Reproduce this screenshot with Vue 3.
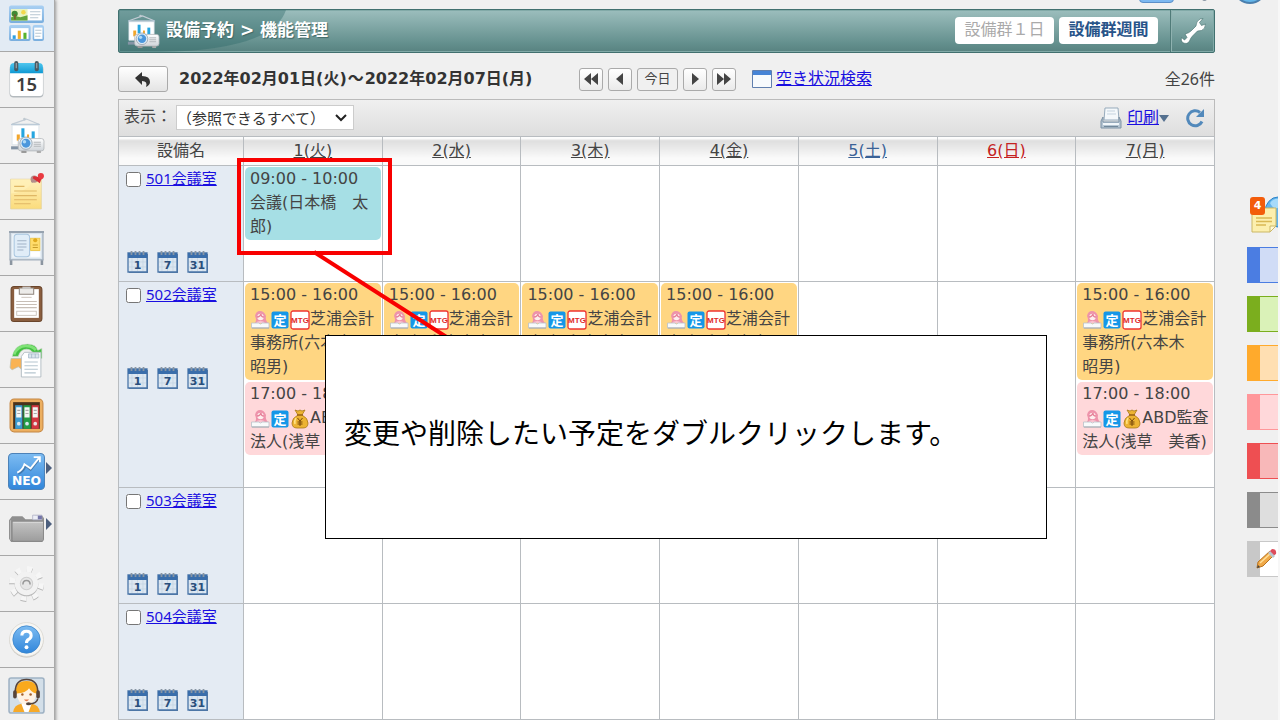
<script setup>
const week = [
  { label: '1(火)' },
  { label: '2(水)' },
  { label: '3(木)' },
  { label: '4(金)' },
  { label: '5(土)', tone: 'sat' },
  { label: '6(日)', tone: 'sun' },
  { label: '7(月)' }
]

const shibaura = { time: '15:00 - 16:00', icons: ['person', 'fixed', 'mtg'], text: '芝浦会計事務所(六本木　昭男)', tone: 'orange' }
const audit = { time: '17:00 - 18:00', icons: ['person', 'fixed', 'money'], text: 'ABD監査法人(浅草　美香)', tone: 'pink' }
const meeting = { time: '09:00 - 10:00', icons: [], text: '会議(日本橋　太郎)', tone: 'teal' }

const rooms = [
  { id: 501, days: [[meeting], [], [], [], [], [], []] },
  { id: 502, tall: true, days: [[shibaura, audit], [shibaura], [shibaura], [shibaura], [], [], [shibaura, audit]] },
  { id: 503, days: [[], [], [], [], [], [], []] },
  { id: 504, days: [[], [], [], [], [], [], []] }
]

const menu = [
  { icon: 'portal', label: 'ポータル', active: true },
  { icon: 'calendar', label: 'スケジュール' },
  { icon: 'projector', label: '設備予約' },
  { icon: 'note', label: 'メモ' },
  { icon: 'board', label: '掲示板' },
  { icon: 'clipboard', label: 'レポート' },
  { icon: 'flow', label: '回覧' },
  { icon: 'binders', label: '文書管理' },
  { icon: 'neo', label: 'NEO', more: true },
  { icon: 'folder', label: 'フォルダ', more: true },
  { icon: 'gear', label: '設定' },
  { icon: 'help', label: 'ヘルプ' },
  { icon: 'support', label: 'サポート' }
]

const tabs = ['blue', 'green', 'amber', 'rose', 'red', 'gray']
</script>

<template>
  <div class="app">
    <svg class="defs" aria-hidden="true">
      <defs>
        <linearGradient id="gBlue" x1="0" y1="0" x2="0" y2="1"><stop offset="0" stop-color="#7dbcf2" /><stop offset="1" stop-color="#3186da" /></linearGradient>
        <linearGradient id="gPanel" x1="0" y1="0" x2="0" y2="1"><stop offset="0" stop-color="#a9d0f3" /><stop offset="1" stop-color="#79aede" /></linearGradient>
        <linearGradient id="gCyan" x1="0" y1="0" x2="0" y2="1"><stop offset="0" stop-color="#4fc6ee" /><stop offset="1" stop-color="#0e98d2" /></linearGradient>
        <linearGradient id="gNote" x1="0" y1="0" x2="0" y2="1"><stop offset="0" stop-color="#fff0bd" /><stop offset="1" stop-color="#fbdc7c" /></linearGradient>
        <linearGradient id="gGray" x1="0" y1="0" x2="0" y2="1"><stop offset="0" stop-color="#c4c4c4" /><stop offset="1" stop-color="#9c9c9c" /></linearGradient>
        <linearGradient id="gWhite" x1="0" y1="0" x2="0" y2="1"><stop offset="0" stop-color="#fff" /><stop offset="1" stop-color="#cfd4d9" /></linearGradient>
        <symbol id="portal" viewBox="0 0 36 36">
          <rect x="1" y="0.500" width="34" height="17" rx="2" fill="url(#gPanel)" /><rect x="3" y="4" width="30" height="11" fill="#fff" />
          <rect x="3" y="4" width="16" height="11" fill="#e6f3c0" /><circle cx="15" cy="7" r="2.200" fill="#f3d94c" /><path d="M3 15v-3l5-1 4 1 7-2v5z" fill="#62a53c" /><circle cx="6.500" cy="8.500" r="3" fill="#3e8a35" /><path d="M6 9h1.500v5H6z" fill="#7b5a2c" />
          <path d="M21.500 6.500h10M21.500 9.500h10M21.500 12.500h8" stroke="#b6c6d2" />
          <rect x="1" y="19.500" width="21" height="15.500" rx="2" fill="url(#gPanel)" /><rect x="3" y="22.500" width="17" height="10.500" fill="#fff" />
          <path d="M6 33v-3.500" stroke="#2f9fe0" stroke-width="3" /><path d="M11 33v-8" stroke="#f0ae26" stroke-width="3" /><path d="M16.500 33v-6" stroke="#58b32f" stroke-width="3" />
          <rect x="24" y="19.500" width="11" height="15.500" rx="2" fill="url(#gPanel)" /><rect x="25.500" y="22" width="8" height="11" fill="#fff" /><path d="M26.500 24.500h6M26.500 27.500h6M26.500 30.500h5" stroke="#b6c6d2" />
        </symbol>
        <symbol id="calendar" viewBox="0 0 36 36">
          <rect x="1.500" y="4" width="33" height="31.500" rx="4" fill="#b4babe" /><rect x="2" y="3" width="32" height="31" rx="3" fill="#fff" /><path d="M2 12V6q0-4 4-4h24q4 0 4 4v6z" fill="url(#gCyan)" />
          <rect x="6" y="0" width="4" height="10" rx="2" fill="#4b5961" /><rect x="26" y="0" width="4" height="10" rx="2" fill="#4b5961" /><path d="M8 2v5M28 2v5" stroke="#a6b1b7" />
          <text x="18" y="29" text-anchor="middle" font-family="Noto Sans" font-size="18" font-weight="600" fill="#3d3d3d">15</text>
        </symbol>
        <symbol id="projector" viewBox="0 0 36 36">
          <path d="M4 7l14-5 12 5" fill="none" stroke="#c3ccd5" stroke-width="1.200" /><circle cx="16" cy="2" r="1.300" fill="#bfc9d0" /><rect x="3" y="6.500" width="28" height="1.500" rx=".7" fill="#b4c5d4" /><path d="M4 8h26v19H4z" fill="#fff" stroke="#d5dfe7" stroke-width=".7" />
          <path d="M10 23v-6" stroke="#f2a62c" stroke-width="3" /><path d="M14.500 20v-9" stroke="#25a5df" stroke-width="3" /><path d="M24.500 21v-7" stroke="#25a5df" stroke-width="3" /><path d="M19.500 21v-4" stroke="#f2a62c" stroke-width="2" />
          <path d="M3 30h8" stroke="#8494a5" stroke-width="3" /><rect x="10" y="21" width="25" height="12" rx="2.500" fill="url(#gWhite)" stroke="#b2b6ba" stroke-width=".8" /><rect x="13" y="33" width="5" height="2" fill="#999" /><rect x="28" y="33" width="4" height="2" fill="#aaa" />
          <path d="M25 24.500h7M25 26.500h7M25 28.500h7" stroke="#b4b8bb" /><circle cx="17.500" cy="25.500" r="6" fill="#dbeaf5" stroke="#95a1ac" stroke-width=".8" /><circle cx="17.500" cy="25.500" r="4.300" fill="#4b97dc" /><circle cx="16" cy="24" r="1.700" fill="#afd9f6" />
        </symbol>
        <symbol id="note" viewBox="0 0 36 36">
          <path d="M2.500 6h30v29h-30z" fill="url(#gNote)" stroke="#e3d3a0" stroke-width=".7" /><path d="M3 20q17-2 22-14H3z" fill="#fff1b7" opacity=".7" /><path d="M6 13h10M6 17.500h22M6 22h22M6 26h22M6 30h16" stroke="#dfb765" />
          <path d="M23 9l4-4" stroke="#747474" stroke-width="1.500" /><circle cx="25.500" cy="6" r="3.500" fill="#b58e8b" /><path d="M25 3l4 1 2-3 3 3-2 3-1 3-7-5z" fill="#d92e35" /><circle cx="32" cy="3" r="3" fill="#e93b42" />
        </symbol>
        <symbol id="board" viewBox="0 0 36 36">
          <path d="M3 29v6M33 29v6" stroke="#8b95a0" stroke-width="2.500" /><rect x="2" y="3" width="32" height="27" fill="#d9e3ec" stroke="#a3b0bd" stroke-width="1.300" /><path d="M1 3h34" stroke="#97a3b0" stroke-width="2" /><rect x="4" y="5" width="28" height="23" fill="#eef4f9" />
          <rect x="6" y="5" width="15" height="22" rx="3" fill="#e0edf8" stroke="#a9c6df" /><path d="M9 11.500h9M9 14.500h9M9 17.500h9M9 20.500h6" stroke="#a0b2c5" />
          <rect x="22" y="9" width="9" height="12" fill="#ffdc6b" stroke="#ecc445" stroke-width=".8" /><circle cx="26.500" cy="11" r="2" fill="#e0a91d" /><path d="M24 15.500h5M24 18h5" stroke="#c79b2a" /><path d="M22 22h9v5h-9z" fill="#fff" />
        </symbol>
        <symbol id="clipboard" viewBox="0 0 36 36">
          <rect x="3" y="1.500" width="30" height="34" rx="3" fill="#8a5e3f" stroke="#6a452b" /><path d="M6 4h24v28H6z" fill="#fff" /><path d="M11 3h14v6H11z" fill="#ecebe9" stroke="#8e857d" /><path d="M14 1.500h8V4h-8z" fill="#c8c5c2" />
          <path d="M13 12h10" stroke="#cfc7c0" /><path d="M8 16h20M8 19h20M8 22h20" stroke="#c7beb6" /><rect x="8.500" y="25.500" width="19" height="4" fill="none" stroke="#c3bbb3" stroke-width=".8" />
        </symbol>
        <symbol id="flow" viewBox="0 0 36 36">
          <path d="M4 15Q7 3 19 3q8 0 10 6l4-2v10H21l4-4q-2-5-7-5-6 0-8 7z" fill="#44bf42" stroke="#d2dbd0" stroke-width=".7" /><path d="M6 13Q10 4 19 5q5 0 8 4" fill="none" stroke="#7fe376" stroke-width="2.500" />
          <path d="M3 17h11v11l-4-3-6 3-2-2z" fill="#f9b354" stroke="#bfbfae" stroke-width=".8" /><path d="M13 15l3-4h16v24H13z" fill="#fff" stroke="#aab4bc" stroke-width=".8" /><path d="M20 12.500h10v4H20z" fill="#dce6ee" stroke="#9fb3c4" stroke-width=".7" /><path d="M23 12.500v4M26.500 12.500v4" stroke="#9fb3c4" stroke-width=".7" /><path d="M16 20.500h13M16 24h13M16 27.500h13M16 31h11" stroke="#b6c6d0" />
        </symbol>
        <symbol id="binders" viewBox="0 0 36 36">
          <rect x="2" y="2" width="32" height="32" rx="4" fill="#ecaf60" stroke="#c48643" /><rect x="5" y="5" width="26" height="26" fill="#49331d" />
          <path d="M7 8h7v23H7z" fill="#3d9cd2" /><path d="M15 8h7v23h-7z" fill="#229c45" /><path d="M23 8h7v23h-7z" fill="#d33741" /><path d="M8 10h5v10H8zM16 10h5v10h-5zM24 10h5v10h-5z" fill="#f4f6f4" /><path d="M9 13h3M9 16h3M17 13h3M17 16h3M25 13h3M25 16h3" stroke="#aaa" />
          <circle cx="10.500" cy="26" r="1.800" fill="#d7e7ee" /><circle cx="18.500" cy="26" r="1.800" fill="#d7e7ee" /><circle cx="26.500" cy="26" r="1.800" fill="#eee2e2" />
        </symbol>
        <symbol id="neo" viewBox="0 0 36 36">
          <rect x=".5" y=".5" width="35" height="35" rx="4" fill="url(#gBlue)" stroke="#4d82b8" /><path d="M10 20q5-2 7-8l5 4 8-10" fill="none" stroke="#315a83" stroke-width="2.500" opacity=".55" /><path d="M9 19q5-2 7-8l6 4L30 5M25 4h6v5" fill="none" stroke="#fff" stroke-width="1.800" />
          <text x="18" y="31" text-anchor="middle" font-family="DejaVu Sans" font-size="12" font-weight="bold" fill="#fff">NEO</text>
        </symbol>
        <symbol id="folder" viewBox="0 0 36 36">
          <path d="M1 11l3-4h10l3 3h9V6h7l2 3v20l-2 3H3l-2-3z" fill="#8f8f8f" /><path d="M4 12h30.500v18l-1 1.500H5L4 30z" fill="url(#gGray)" stroke="#858585" stroke-width=".8" /><path d="M5 13h29" stroke="#d8d8d8" /><path d="M24 6h9v4.500h-9z" fill="#eceef6" stroke="#a9aac0" stroke-width=".7" /><path d="M29 6.500h4v3.500h-4z" fill="#7475a8" /><path d="M2.500 11v19" fill="none" stroke="#b8b8b8" />
        </symbol>
        <symbol id="gear" viewBox="0 0 36 36">
          <circle cx="18" cy="19" r="14" fill="none" stroke="#b5b5b5" stroke-width="6" stroke-dasharray="5 6" /><circle cx="18" cy="18" r="14" fill="none" stroke="#f6f6f6" stroke-width="6" stroke-dasharray="5 6" />
          <circle cx="18" cy="19" r="11.500" fill="#b9b9b9" /><circle cx="18" cy="18" r="11.500" fill="#f2f2f2" /><circle cx="18" cy="18" r="6" fill="#e6e6e6" stroke="#cfcfcf" /><path d="M14.500 19q0-4 3.500-4t3.500 4" fill="none" stroke="#999" stroke-width="1.500" />
        </symbol>
        <symbol id="help" viewBox="0 0 36 36">
          <circle cx="18" cy="19" r="16.500" fill="#c4c1bb" /><circle cx="18" cy="18" r="16.500" fill="#f7f6f3" stroke="#dbd8d2" stroke-width=".8" /><circle cx="18" cy="18" r="13.300" fill="url(#gBlue)" stroke="#3c86cc" stroke-width=".8" /><path d="M13.500 14q0-4 4.500-4t4.500 4q0 2.500-2.500 4-2 1-2 3.500" fill="none" stroke="#fff" stroke-width="3" /><circle cx="18" cy="25.500" r="1.900" fill="#fff" />
        </symbol>
        <symbol id="support" viewBox="0 0 36 36">
          <rect x="1" y="1" width="34" height="34" rx="2" fill="#d3dfe9" stroke="#9fb2c4" stroke-width="1.500" /><path d="M5 34q1-7 8-8h10q7 1 8 8z" fill="#f7a927" /><path d="M13 26h10l-3 8h-4z" fill="#fff" /><path d="M8 17Q6 4 18 4t10 13z" fill="#f9a91d" /><path d="M8.500 16q9 0 12-5 2 4 7 5-1 11-9.500 11T8.500 16z" fill="#fff3e4" />
          <path d="M7 15Q7 2.500 18 2.500T29 15" fill="none" stroke="#57443a" stroke-width="1.500" /><rect x="5" y="13" width="3.500" height="8" rx="1.700" fill="#57443a" /><rect x="27.500" y="13" width="3.500" height="8" rx="1.700" fill="#57443a" /><path d="M29 21q-1 5-8 5" fill="none" stroke="#57443a" stroke-width="1.500" /><ellipse cx="20" cy="26" rx="2.500" ry="1.500" fill="#57443a" /><circle cx="14" cy="17" r="1.200" fill="#a5602a" /><circle cx="22" cy="17" r="1.200" fill="#a5602a" /><path d="M15.500 22h5q-2.500 3-5 0z" fill="#e87f50" />
        </symbol>
        <symbol id="person" viewBox="0 0 20 20">
          <path d="M5 13q2-3 0-7 1-5 5-5t6 5q-1 4 2 7z" fill="#ee93ab" /><circle cx="10.500" cy="7" r="3.200" fill="#fdeeee" /><path d="M7 7q3 0 4-3 0 3 3 3" fill="none" stroke="#e68198" stroke-width="1.300" /><path d="M6 13q1-2 4.500-2t4.500 2z" fill="#f9c3d0" /><path d="M1.500 13h7l2 1 2-1h6.500v5h-17.500z" fill="#f8fafb" stroke="#b8c0c9" stroke-width=".8" /><path d="M2 18h17" stroke="#a2a9b0" />
        </symbol>
        <symbol id="fixed" viewBox="0 0 20 20"><rect x="1.500" y="1.500" width="17" height="17" rx="2" fill="#1597e8" /><text x="10" y="15" text-anchor="middle" font-family="Noto Sans CJK JP" font-size="13" font-weight="bold" fill="#fff">定</text></symbol>
        <symbol id="mtg" viewBox="0 0 20 20"><rect x="1" y="1" width="18" height="18" rx="2" fill="#fff" stroke="#ee3430" stroke-width="1.300" /><text x="10" y="13" text-anchor="middle" font-family="Liberation Sans" font-size="8" font-weight="bold" fill="#e02828">MTG</text></symbol>
        <symbol id="money" viewBox="0 0 20 20"><path d="M5 1l3 1 2-1 2 1 3-1-3 5q6 3 6 8 0 5-5 5H7q-5 0-5-5 0-5 6-8z" fill="#edb333" stroke="#a87919" stroke-width=".8" /><path d="M7 6h6" stroke="#986215" stroke-width="1.500" /><path d="M6 9q-2 3-1 6" fill="none" stroke="#ffe486" stroke-width="1.500" /><path d="M7.500 9l2.500 3 2.500-3M10 12v5M7.500 13h5M7.500 15h5" fill="none" stroke="#79490b" /></symbol>
        <symbol id="minical" viewBox="0 0 22 24"><path d="M2 4h19v19H2z" fill="#5678a0" /><path d="M1 3h19v19H1z" fill="#dce7f1" stroke="#4a76a8" stroke-width="1.300" /><path d="M1 3h19v5H1z" fill="#3a6eab" /><path d="M4.500 1v4M8.500 1v4M12.500 1v4M16.500 1v4" stroke="#8896a4" stroke-width="1.800" /><path d="M5 8v13M10.500 8v13M16 8v13M2 12h17M2 17h17" stroke="#c2d2e1" stroke-width=".7" /></symbol>
      </defs>
    </svg>

    <nav class="side">
      <a v-for="m in menu" :key="m.icon" href="#" class="side-item" :class="{ active: m.active }" :aria-label="m.label">
        <svg class="side-icon"><use :href="'#' + m.icon" /></svg>
        <span v-if="m.more" class="more"></span>
      </a>
    </nav>

    <main class="main">
      <header class="title-bar">
        <svg class="swoosh" viewBox="0 0 168 42" preserveAspectRatio="none" aria-hidden="true"><path d="M0 0h167Q154 40 40 42H0z" fill="#2b6767" opacity=".38" /></svg>
        <svg class="title-icon"><use href="#projector" /></svg>
        <h1>設備予約 &gt; 機能管理</h1>
        <button class="view off">設備群１日</button>
        <button class="view">設備群週間</button>
        <button class="tool" aria-label="設定">
          <svg viewBox="0 0 28 28" width="28" height="28"><path d="M3.500 25.500q-2-2-1-5l3 2.500 2.500-2.500-2-3.500q4-1 6-3l5-5q0-5 4-7l3-.5-3.500 4 2 3 4-1.500q0 5-4 6.500l-4 .5-5 5q-2 2-3 5-2 4-7 1.500z" fill="#fff" stroke="#3f6d6b" stroke-width=".6" /></svg>
        </button>
      </header>

      <div class="nav-row">
        <button class="back" aria-label="戻る"><svg viewBox="0 0 18 18" width="18" height="18"><path d="M1 8l7-6v4q8 0 8 6 0 3-4 5 2-6-4-6v4z" fill="#333" /></svg></button>
        <h2><span>2022年02月01日(火)</span><span>～</span><span>2022年02月07日(月)</span></h2>
        <div class="pager">
          <button class="step" aria-label="前週"><svg viewBox="0 0 16 12" width="16" height="12"><path d="M8 0v12L1 6zM15 0v12L8 6z" /></svg></button>
          <button class="step" aria-label="前日"><svg viewBox="0 0 16 12" width="16" height="12"><path d="M11 0v12L4 6z" /></svg></button>
          <button class="today">今日</button>
          <button class="step" aria-label="翌日"><svg viewBox="0 0 16 12" width="16" height="12"><path d="M5 0v12l7-6z" /></svg></button>
          <button class="step" aria-label="翌週"><svg viewBox="0 0 16 12" width="16" height="12"><path d="M1 0v12l7-6zM8 0v12l7-6z" /></svg></button>
        </div>
        <a class="search" href="#"><svg viewBox="0 0 20 18" width="20" height="18"><path d="M.5.500h19v17H.500z" fill="#f7fafd" stroke="#607fae" /><path d="M1 1h18v4H1z" fill="#4684d6" /></svg><span>空き状況検索</span></a>
        <span class="total">全26件</span>
      </div>

      <div class="filter">
        <label for="scope">表示：</label>
        <div class="select-wrap">
          <select id="scope"><option>（参照できるすべて）</option></select>
          <svg viewBox="0 0 12 8" width="12" height="8"><path d="M1 1l5 5 5-5" fill="none" stroke="#222" stroke-width="2" /></svg>
        </div>
        <a class="print" href="#">
          <svg viewBox="0 0 22 22" width="22" height="22"><path d="M5 1h13l1 12H4z" fill="#f4f8fb" stroke="#97abbc" /><path d="M7 4h8M7 7h9" stroke="#c5d3df" /><path d="M3 10l-2 4v7h20v-7l-2-4v5H3z" fill="#b5c5d2" stroke="#7d92a5" /><path d="M3 17h16" stroke="#f2f7fa" stroke-width="2" /><path d="M4 19.500h14" stroke="#71889b" /></svg>
          <span>印刷</span><i class="caret"></i>
        </a>
        <button class="reload" aria-label="更新"><svg viewBox="0 0 20 20" width="20" height="20"><path d="M17 13.500A7.500 7.500 0 1 1 15 4.500" fill="none" stroke="#5289bb" stroke-width="3" /><path d="M19 1v8h-8z" fill="#5289bb" /></svg></button>
      </div>

      <table class="grid">
        <thead>
          <tr><th class="name-col">設備名</th><th v-for="d in week" :key="d.label"><a href="#" :class="d.tone">{{ d.label }}</a></th></tr>
        </thead>
        <tbody>
          <tr v-for="r in rooms" :key="r.id" :class="{ tall: r.tall }">
            <td class="name">
              <div class="room"><input :id="'room' + r.id" type="checkbox" :aria-label="r.id + '会議室'" /><a href="#">{{ r.id }}会議室</a></div>
              <div class="ranges">
                <a v-for="n in [1, 7, 31]" :key="n" href="#" :aria-label="n + '日表示'">
                  <svg viewBox="0 0 22 24" width="22" height="24"><use href="#minical" /><text x="10.500" y="19" text-anchor="middle" font-family="DejaVu Sans" font-size="11" font-weight="bold" fill="#294f7c">{{ n }}</text></svg>
                </a>
              </div>
            </td>
            <td v-for="(events, i) in r.days" :key="i" class="day">
              <div v-for="e in events" :key="e.time" class="event" :class="e.tone">
                <div>{{ e.time }}</div>
                <div><svg v-for="ic in e.icons" :key="ic" class="tag"><use :href="'#' + ic" /></svg>{{ e.text }}</div>
              </div>
            </td>
          </tr>
        </tbody>
      </table>
    </main>

    <aside class="memo">
      <div class="memo-head">
        <svg viewBox="0 0 29 38" width="29" height="38"><ellipse cx="28" cy="16" rx="13" ry="15" fill="#62b4ec" stroke="#2c83c7" /><path d="M20 7q4-5 9-4v8q-5 4-9-4z" fill="#a6dafa" /><path d="M2 12h24v18l-6 6H2z" fill="#fcefae" stroke="#cbb765" /><path d="M20 36v-6h6z" fill="#fff9d8" stroke="#cbb765" /><path d="M6 22h16M6 25.500h16M6 29h10" stroke="#d9b954" stroke-width="1.300" /></svg>
        <span class="count">4</span>
      </div>
      <button v-for="t in tabs" :key="t" class="tab" :class="t" :aria-label="t"></button>
      <button class="tab edit" aria-label="編集"><svg viewBox="0 0 22 22" width="22" height="22"><path d="M2 20l1-6L15 3l4 4L8 18z" fill="#f0a948" stroke="#b87320" /><path d="M5 15L16 5" stroke="#ffe09a" stroke-width="1.500" /><path d="M14 4l3-3q5 0 4 5l-3 2z" fill="#dd4b5b" /><path d="M13 5l2-2 5 5-2 2z" fill="#b8c4cd" /><path d="M2 20l1-3 2 2z" fill="#444" /></svg></button>
    </aside>

    <div class="edge" aria-hidden="true"><span class="edge-box"></span><span class="edge-dot"></span><span class="edge-round"></span></div>

    <div class="guide">
      <div class="frame"></div>
      <svg class="leader" viewBox="0 0 140 90"><path d="M6 4l134 86" stroke="#f80000" stroke-width="4" /></svg>
      <p class="callout">変更や削除したい予定をダブルクリックします。</p>
    </div>
  </div>
</template>

<style>
html, body { margin: 0; background: #f0f0f0; overflow: hidden; }
</style>

<style scoped>
.app { position: relative; display: flex; height: 100vh; overflow: hidden; background: #f0f0f0; color: #444; font: 16px/24px "DejaVu Sans", "Noto Sans CJK JP", sans-serif; }
.app * { box-sizing: border-box; }
.defs { position: absolute; width: 0; height: 0; }
button { font: inherit; padding: 0; margin: 0; }
svg { display: block; flex: none; }
a { color: #1a0fe0; }

.side { flex: none; width: 55px; height: max-content; border-right: 1px solid #aaa; box-shadow: 1px 0 3px #999; background: #f0f0f0; }
.side-item { position: relative; display: flex; align-items: center; height: 56px; padding-left: 8px; border-bottom: 1px solid #a8a8a8; }
.side-item.active { height: 52px; padding-bottom: 4px; background: #e2ebf4; }
.side-icon { width: 37px; height: 37px; }
.more { position: absolute; left: 46px; top: 18px; border: 6px solid transparent; border-left-color: #4c5f7e; border-right-width: 0; }

.main { flex: 1; min-width: 0; margin: 9px 32px 0 63px; }
.title-bar { position: relative; display: flex; align-items: center; height: 44px; border: 1px solid #41706f; background: linear-gradient(#9cbebd, #638f8d 80%, #588280); box-shadow: inset 0 0 0 1px #82aaa8; border-radius: 2px; }
.swoosh { position: absolute; left: 0; top: 0; width: 168px; height: 42px; }
.title-icon { position: relative; width: 35px; height: 35px; margin-left: 6px; }
h1 { position: relative; flex: 1; margin: 0 0 2px 6px; font-size: 17px; color: #fff; text-shadow: 1px 1px 1px #416867; }
.view { width: 99px; height: 27px; margin: 0 5px 2px 0; border: 0; border-radius: 4px; background: #fff; color: #285489; font-family: "Noto Sans CJK JP", sans-serif; font-weight: 700; line-height: 20px; padding-bottom: 4px; }
.view.off { color: #aaa; font-weight: 400; }
.tool { display: flex; align-items: center; justify-content: center; align-self: stretch; width: 44px; margin-left: 7px; border: 0; border-left: 1px solid #507b79; box-shadow: inset 1px 0 #8fb2b0; background: none; }

.nav-row { display: flex; align-items: center; height: 46px; padding-top: 6px; }
.back { display: flex; align-items: center; justify-content: center; width: 50px; height: 26px; border: 1px solid #aaa; border-radius: 3px; background: linear-gradient(#fff, #e4e4e4); }
h2 { display: flex; gap: 1px; width: 400px; margin: 0 0 0 11px; font-size: 16px; color: #333; white-space: nowrap; }
.pager { display: flex; gap: 5px; margin-right: 17px; }
.step, .today { display: flex; align-items: center; justify-content: center; width: 24px; height: 23px; border: 1px solid #aaa; border-radius: 3px; background: linear-gradient(#fff, #eaeaea); fill: #444; }
.today { width: 41px; padding-bottom: 2px; font-size: 13px; font-family: "Noto Sans CJK JP", sans-serif; color: #444; background: #f0f0f0; }
.search { display: flex; align-items: center; gap: 4px; margin-left: -1px; }
.total { margin-left: auto; font-family: "Noto Sans", "Noto Sans CJK JP", sans-serif; }

.filter { display: flex; align-items: center; height: 37px; padding: 0 9px 0 5px; border: 1px solid #bbb; border-bottom: 0; background: linear-gradient(#f0f0f0, #dedede); }
.filter label { padding-bottom: 2px; }
.select-wrap { position: relative; margin-left: 4px; }
.select-wrap svg { position: absolute; right: 7px; top: 9px; pointer-events: none; }
select { appearance: none; width: 178px; height: 25px; padding: 0; border: 1px solid #ccc; background: #fff; color: #333; font: 15px/23px "Noto Sans CJK JP", sans-serif; }
.print { display: flex; align-items: center; gap: 5px; margin-left: auto; }
.caret { margin-left: -5px; border: 5px solid transparent; border-top: 7px solid #54708f; border-bottom: 0; }
.reload { margin-left: 16px; border: 0; background: none; }

.grid { width: 100%; table-layout: fixed; border-collapse: collapse; background: #fff; }
th, td { padding: 0; border: 1px solid #b8bcc0; }
th { height: 29px; background: linear-gradient(#fff 1px, #dedede 3px, #fafafa 75%); font-weight: 400; line-height: 26px; }
th a { color: #444; }
th a.sat { color: #3a6297; }
th a.sun { color: #c42222; }
.name-col { width: 125px; }
td { height: 116px; vertical-align: top; }
.tall td { height: 206px; }
.name { background: #e4ebf3; }
.room { display: flex; align-items: flex-start; height: 26px; padding-left: 7px; gap: 5px; font: 15px/24px "Noto Sans", "Noto Sans CJK JP", sans-serif; }
.room input { width: 15px; height: 15px; margin: 6px 0 0; }
.ranges { display: flex; gap: 8px; padding: 58px 0 0 8px; }
.event { margin: 1px 1px 2px; padding: 0 1px 1px 5px; border-radius: 5px; }
.event.teal { background: #a6dfe5; }
.event.orange { background: #ffd682; }
.event.pink { background: #ffd8da; }
.tag { display: inline-block; width: 20px; height: 20px; vertical-align: -6px; }

.memo { flex: none; display: flex; flex-direction: column; gap: 13px; width: 33px; padding-top: 196px; border-right: 2px solid #f7f7f7; }
.memo-head { position: relative; height: 38px; padding-left: 3px; overflow: hidden; }
.count { position: absolute; left: 3px; top: 1px; width: 15px; height: 18px; border-radius: 3px; background: #f35c0a; color: #fff; font: bold 11px/17px "DejaVu Sans", sans-serif; text-align: center; }
.tab { flex: none; height: 36px; border: 0 solid; border-width: 1px 0 1px 13px; }
.blue { border-color: #4b7de2; background: #d0dcf6; }
.green { border-color: #7bae1e; background: #daf2b8; }
.amber { border-color: #ffaa2c; background: #ffdfb2; }
.rose { border-color: #ff979a; background: #ffd8da; }
.red { border-color: #ee4f52; background: #f8b8b9; }
.gray { border-color: #8b8b8b; background: #dedede; }
.edit { border-color: #c8c8c8; background: #fff; }
.edit svg { margin-left: -5px; }

.edge { position: absolute; top: 0; right: 0; width: 144px; height: 4px; overflow: hidden; }
.edge span { position: absolute; }
.edge-box { left: 3px; bottom: 1px; width: 35px; height: 8px; border: 1px solid #5b8fc8; border-radius: 4px; background: #7cb8f0; }
.edge-dot { left: 66px; bottom: 3px; width: 5px; height: 5px; border-radius: 3px; background: #8a97a5; }
.edge-round { left: 97px; bottom: 0; width: 34px; height: 34px; border: 2px solid #4a7fae; border-radius: 50%; background: #64b6ea; }

.guide { position: absolute; inset: 0; pointer-events: none; }
.frame { position: absolute; left: 237px; top: 158px; width: 155px; height: 97px; border: 4px solid #f80000; }
.leader { position: absolute; left: 308px; top: 248px; width: 140px; height: 90px; }
.callout { position: absolute; left: 325px; top: 335px; display: flex; align-items: center; width: 722px; height: 204px; margin: 0; padding: 0 18px 11px; border: 1px solid #000; background: #fff; color: #000; font: 28px/40px "Noto Sans CJK JP", sans-serif; }
</style>
